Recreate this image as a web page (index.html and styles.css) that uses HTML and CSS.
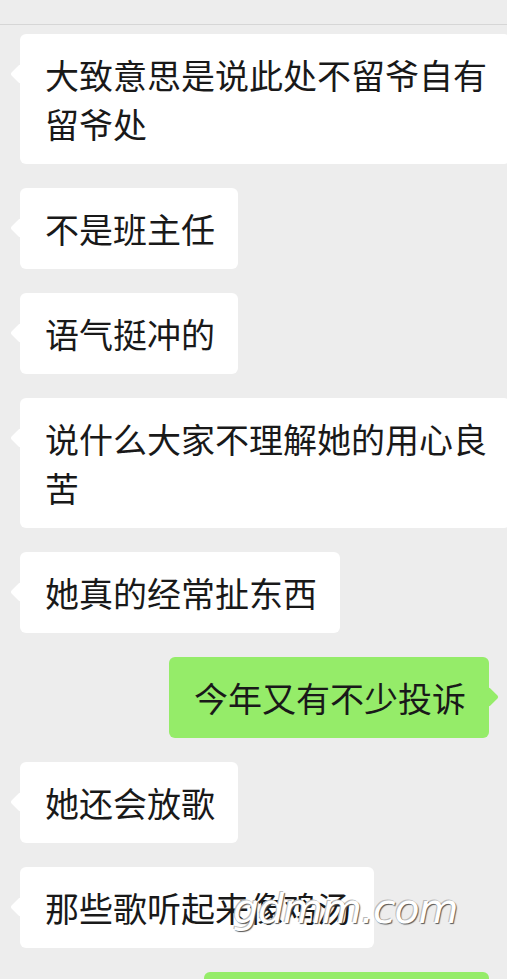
FILE: index.html
```html
<!DOCTYPE html>
<html lang="zh-CN">
<head>
    <meta charset="UTF-8">
    <meta name="viewport" content="width=device-width, initial-scale=1.0">
    <title>聊天记录</title>
    <link rel="stylesheet" href="styles.css">
</head>
<body>
    <div class="topbar"></div>

    <div class="chat">
        <div class="msg left"><div class="bubble">大致意思是说此处不留爷自有留爷处</div></div>
        <div class="msg left"><div class="bubble">不是班主任</div></div>
        <div class="msg left"><div class="bubble">语气挺冲的</div></div>
        <div class="msg left"><div class="bubble">说什么大家不理解她的用心良苦</div></div>
        <div class="msg left"><div class="bubble">她真的经常扯东西</div></div>
        <div class="msg right"><div class="bubble">今年又有不少投诉</div></div>
        <div class="msg left"><div class="bubble">她还会放歌</div></div>
        <div class="msg left"><div class="bubble">那些歌听起来像鸡汤</div></div>
        <!-- only the top edge of the next bubble shows -->
        <div class="msg right"><div class="bubble stub"></div></div>
    </div>

    <div class="watermark">gdmm.com</div>
</body>
</html>
```

FILE: styles.css
```css
body {
    margin: 0;
    width: 507px;
    height: 979px;
    overflow: hidden;
    position: relative;
    background-color: #ededed;
    font-family: "Noto Sans CJK SC", "Noto Sans", sans-serif;
}
.topbar {
    height: 24px;
    border-bottom: 1px solid #d6d6d6;
}
.chat {
    display: flex;
    flex-direction: column;
    gap: 24px;
    padding: 9px 18px 0 20px;
}
.msg {
    display: flex;
}
.msg.right {
    justify-content: flex-end;
}
.bubble {
    position: relative;
    box-sizing: border-box;
    max-width: 490px;
    flex-shrink: 0;
    padding: 16px 23px 16px 25px;
    background: #fff;
    border-radius: 6px;
    color: #191919;
    font-size: 34px;
    line-height: 49px;
}
.bubble::before {
    content: "";
    position: absolute;
    top: 33px;
    width: 14px;
    height: 14px;
    background: inherit;
    border-radius: 2px;
    transform: rotate(45deg);
}
.left .bubble::before {
    left: -7px;
}
.right .bubble {
    background: #95ec69;
}
.right .bubble::before {
    right: -7px;
}
.bubble.stub {
    width: 285px;
    height: 81px;
}
.watermark {
    position: absolute;
    left: 233px;
    top: 885px;
    font-family: "DejaVu Sans", sans-serif;
    font-weight: 200;
    font-style: italic;
    font-size: 41px;
    letter-spacing: -1px;
    color: #fff;
    text-shadow: 1px 1px 1px #555, -1px -1px 0 #bbb;
}
```
